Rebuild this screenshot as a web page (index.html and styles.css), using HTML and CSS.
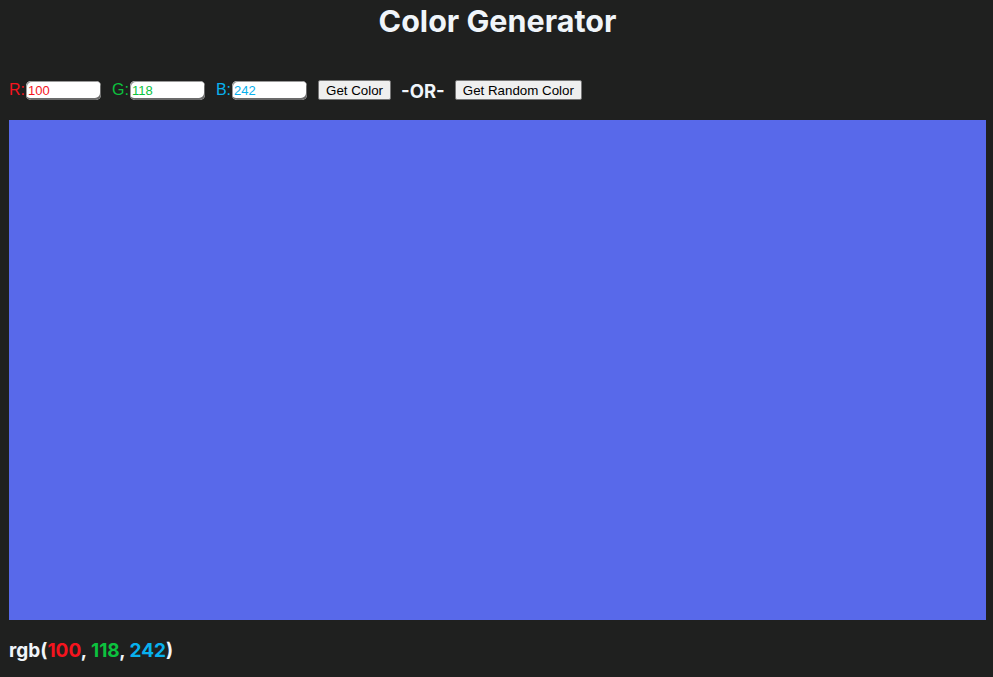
FILE: index.html
```html
<!DOCTYPE html>
<html>
<head>
<meta charset="utf-8">
<link rel="stylesheet" href="styles.css">
</head>
<body>
<h1 class="title">Color Generator</h1>
<div class="controls">
  <label class="lbl red">R:<input class="field red" type="text" value="100"></label>
  <label class="lbl green">G:<input class="field green" type="text" value="118"></label>
  <label class="lbl blue">B:<input class="field blue" type="text" value="242"></label>
  <button class="btn">Get Color</button>
  <span class="or">-OR-</span>
  <button class="btn">Get Random Color</button>
</div>
<div class="swatch" style="background: rgb(88, 105, 234);"></div>
<p class="result">rgb(<span class="red">100</span>, <span class="green">118</span>, <span class="blue">242</span>)</p>
</body>
</html>
```

FILE: styles.css
```css
html, body {
  margin: 0;
  padding: 0;
  background: #1f201f;
}
body {
  padding: 0 7px 0 9px;
  font-family: Inter, "Liberation Sans", sans-serif;
  color: #f0f5fa;
}
.title {
  margin: 0;
  padding-top: 4px;
  height: 40px;
  text-align: center;
  font-size: 30.5px;
  font-weight: 700;
  line-height: 34px;
}
.controls {
  display: flex;
  align-items: center;
  height: 26px;
  margin-top: 33px;
  margin-bottom: 17px;
}
.lbl {
  display: flex;
  align-items: center;
  font-family: "Liberation Sans", Arial, sans-serif;
  font-size: 16px;
  margin-right: 11px;
}
.field {
  width: 75px;
  height: 19px;
  box-sizing: border-box;
  margin: 1px 0 0 1px;
  padding: 0 2px;
  border: none;
  border-radius: 5px;
  background: #fff;
  box-shadow: inset -1px -2px 0 #6b6b6b, inset 1px 1px 0 #9a9a9a;
  font-family: "Liberation Sans", Arial, sans-serif;
  font-size: 13px;
  outline: none;
}
.red { color: #f5141e; }
.green { color: #0cc23e; }
.blue { color: #08b1ee; }
.btn {
  height: 20px;
  padding: 0 7px;
  font-family: "Liberation Sans", Arial, sans-serif;
  font-size: 13.33px;
  color: #000;
  background: #efefef;
  border: 1px solid #767676;
  border-radius: 2px;
}
.or {
  font-size: 18.5px;
  font-weight: 700;
  margin: 0 10px;
  padding-top: 2px;
}
.swatch {
  height: 500px;
}
.result {
  margin: 19px 0 0;
  font-size: 19px;
  font-weight: 700;
  line-height: 24px;
}
```
